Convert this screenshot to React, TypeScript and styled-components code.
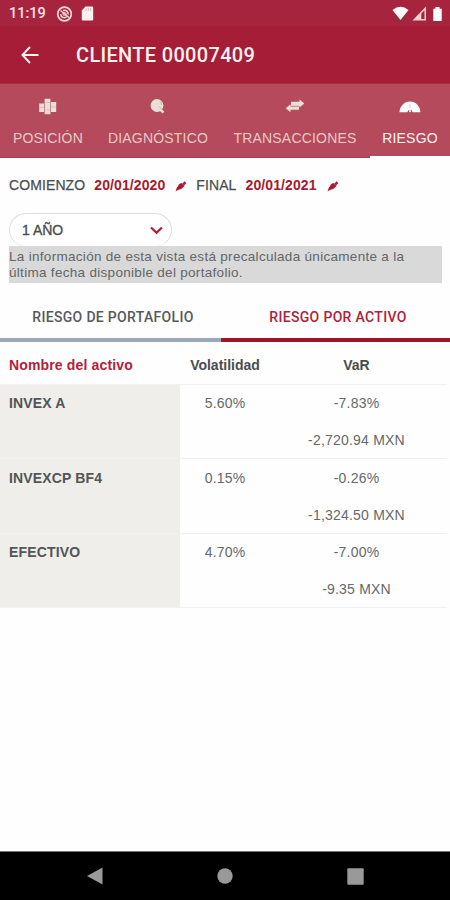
import React from 'react';
import styled, { createGlobalStyle } from 'styled-components';

const GlobalStyle = createGlobalStyle`
  * { box-sizing: border-box; }
  body { margin: 0; background: #fff; }
`;

const Screen = styled.div`
  width: 450px;
  height: 900px;
  display: flex;
  flex-direction: column;
  overflow: hidden;
  background: #fefefe;
  font: 14px/16px "Liberation Sans", Arial, sans-serif;
  color: #555759;
  white-space: nowrap;
`;

const StatusBar = styled.div`
  height: 26px;
  flex: none;
  display: flex;
  align-items: center;
  padding: 1px 5px 0 9px;
  background: #a6243e;
  color: #fbe9e6;
  font: 500 14.5px/20px Roboto, sans-serif;
`;

const Clock = styled.span`
  width: 47px;
`;

const StatusIcons = styled.div<{ $end?: boolean }>`
  display: flex;
  align-items: center;
  gap: ${(p) => (p.$end ? 3 : 8)}px;
  margin-left: ${(p) => (p.$end ? 'auto' : '0')};
`;

const AppBar = styled.header`
  height: 57px;
  flex: none;
  display: flex;
  align-items: center;
  padding-left: 20px;
  background: #a51d36;
  color: #fff1ee;
`;

const Title = styled.h1`
  margin: 1px 0 0 36px;
  font: 500 20px/24px Roboto, sans-serif;
  letter-spacing: 0.32px;
`;

const TabBar = styled.nav`
  height: 75px;
  flex: none;
  display: flex;
  background: #b54a5d;
  border-top: 1px solid #ac2f47;
`;

const Tab = styled.button<{ $width: number; $active?: boolean }>`
  width: ${(p) => p.$width}px;
  flex: none;
  display: flex;
  flex-direction: column;
  align-items: center;
  margin: 0;
  padding: 13px 0 0;
  border: 0;
  border-bottom: ${(p) => (p.$active ? '2px solid #fff' : '1px solid #ad3c50')};
  background: none;
  color: ${(p) => (p.$active ? '#fff3f0' : '#e9c9c6')};
  font: inherit;
  letter-spacing: 0.2px;
  svg { height: 20px; margin-bottom: 13px; color: ${(p) => (p.$active ? '#fff' : '#eadfd6')}; }
`;

const Content = styled.main`
  flex: 1;
  display: flex;
  flex-direction: column;
`;

const DateRow = styled.div`
  display: flex;
  align-items: center;
  height: 55px;
  padding: 0 0 1px 9px;
  svg { margin-top: 2px; }
`;

const DateLabel = styled.span`
  color: #4b4d50;
  letter-spacing: 0.1px;
  -webkit-text-stroke: 0.25px #4b4d50;
`;

const DateValue = styled.strong`
  margin: 0 10px 0 9px;
  color: #a8192f;
  letter-spacing: 0.1px;
`;

const DateField = styled.div`
  display: flex;
  align-items: center;
  margin-right: 9px;
`;

const Period = styled.button`
  width: 163px;
  height: 34px;
  margin: 0 0 0 9px;
  padding: 0 8px 0 12px;
  display: flex;
  align-items: center;
  justify-content: space-between;
  border: 1px solid #dedede;
  border-bottom-color: #f0f0f0;
  border-radius: 17px;
  background: #fff;
  color: #4b4d50;
  font: inherit;
  -webkit-text-stroke: 0.35px #4b4d50;
`;

const Notice = styled.p`
  width: 433px;
  height: 37px;
  margin: -1px 0 0 9px;
  padding-top: 3px;
  background: #d9d9d9;
  color: #646668;
  font-size: 13.5px;
  letter-spacing: 0.3px;
`;

const Segments = styled.div`
  display: flex;
  height: 59px;
`;

const Segment = styled.button<{ $active?: boolean }>`
  width: ${(p) => (p.$active ? 229 : 221)}px;
  margin: 0;
  padding: 12px 0 0 5px;
  border: 0;
  border-bottom: 4px solid ${(p) => (p.$active ? '#a3142c' : '#9ba8b8')};
  background: none;
  color: ${(p) => (p.$active ? '#b0213a' : '#56595c')};
  font: 500 14px/18px Roboto, sans-serif;
  letter-spacing: 0.32px;
`;

const Table = styled.div`
  display: flex;
  flex-direction: column;
`;

const Row = styled.div<{ $head?: boolean }>`
  display: grid;
  grid-template-columns: 180px 90px 173px;
  width: 447px;
  height: ${(p) => (p.$head ? 42.5 : 74.6)}px;
  border-bottom: 1px solid #f1f1f1;
`;

const NameCell = styled.div<{ $head?: boolean }>`
  padding: ${(p) => (p.$head ? 15 : 10.5)}px 0 0 9px;
  background: ${(p) => (p.$head ? 'transparent' : '#efeeea')};
  color: ${(p) => (p.$head ? '#b2213b' : '#535557')};
  font-weight: bold;
  letter-spacing: 0.15px;
`;

const Cell = styled.div<{ $head?: boolean }>`
  display: flex;
  flex-direction: column;
  gap: 21px;
  align-items: center;
  padding-top: ${(p) => (p.$head ? 15 : 10.5)}px;
  color: ${(p) => (p.$head ? '#4b4d50' : '#666869')};
  font-weight: ${(p) => (p.$head ? 'bold' : 'normal')};
  letter-spacing: ${(p) => (p.$head ? 0 : 0.2)}px;
`;

const SystemNav = styled.footer`
  height: 49px;
  flex: none;
  display: grid;
  grid-template-columns: repeat(3, 130px);
  justify-content: center;
  align-items: center;
  justify-items: center;
  border-top: 1px solid #777;
  background: #000;
`;

const Pencil = () => (
  <svg width="12" height="12" viewBox="0 0 12 12" fill="#ae1932">
    <path d="M.5 11.2 2 7.2 3.2 6l.6-1.7L6.5 3l1.3.6L9.4 1.2l2 2-2.2 2 .2 1L6.2 9l-2 .6Z" />
    <path d="m7.2 3.6 2 2" stroke="#d77d8b" strokeWidth=".6" />
  </svg>
);

const tabs = [
  {
    label: 'POSICIÓN', width: 96, icon: (
      <svg width="20" height="20" viewBox="0 0 20 20" fill="currentColor">
        <path d="M1.2 6.5H6V15H1.2ZM6.6 1.8h5.8v15.4H6.6ZM13 5h5.2v10H13Z" />
        <path d="M1 10.5h5M13 10h5M6.6 5.5h5.8M6.6 13h5.8" stroke="#d5a8a8" strokeWidth=".6" />
      </svg>
    ),
  },
  {
    label: 'DIAGNÓSTICO', width: 124, icon: (
      <svg width="20" height="20" viewBox="0 0 20 20" fill="currentColor">
        <circle cx="9" cy="8.5" r="6.4" />
        <path d="m11.5 11.8 4 3.8" stroke="currentColor" strokeWidth="2.6" />
        <path d="m11 9.5 3 3M12.8 4.5l.7 3.5" stroke="#cf9c9e" strokeWidth=".8" fill="none" />
      </svg>
    ),
  },
  {
    label: 'TRANSACCIONES', width: 150, icon: (
      <svg width="20" height="20" viewBox="0 0 20 20" fill="currentColor">
        <path d="M6 4.8h8.5V2.6l4.8 4-4.8 3.8V9H6ZM14 12.8H5.5v2.5L.7 11.2l4.8-4v2.2H14Z" />
        <path d="M6 9.2h8" stroke="#c98d90" strokeWidth=".6" />
      </svg>
    ),
  },
  {
    label: 'RIESGO', width: 80, active: true, icon: (
      <svg width="22" height="20" viewBox="0 0 22 20" fill="currentColor">
        <path d="M.5 15.2a10.5 10.7 0 0 1 21 0h-8a2.5 2.5 0 0 0-5 0Z" />
        <circle cx="11" cy="14.2" r="1.1" />
        <path d="M11 7v4M4.5 10l.8.8M17.5 10l-.8.8" stroke="#dba5ad" strokeWidth=".7" />
      </svg>
    ),
  },
];

const assets = [
  { name: 'INVEX A', volatility: '5.60%', pct: '-7.83%', amount: '-2,720.94 MXN' },
  { name: 'INVEXCP BF4', volatility: '0.15%', pct: '-0.26%', amount: '-1,324.50 MXN' },
  { name: 'EFECTIVO', volatility: '4.70%', pct: '-7.00%', amount: '-9.35 MXN' },
];

export default function App() {
  return (
    <Screen>
      <GlobalStyle />
      <StatusBar>
        <Clock>11:19</Clock>
        <StatusIcons>
          <svg width="17" height="16" viewBox="0 0 17 16" fill="none" stroke="#f6dcd9">
            <circle cx="8.5" cy="8" r="6.8" strokeWidth="1.7" />
            <path d="m4.5 4.5 8.5 7M4.7 8c0 3.5 4 4.5 6 2.8M7 4.5c3-1 5.5 1.5 5 4" strokeWidth="1.5" />
            <circle cx="8.5" cy="8" r="1.6" strokeWidth="1" />
          </svg>
          <svg width="13" height="15" viewBox="0 0 13 15" fill="#fff1ee">
            <path d="M4.5.5H11q1.2 0 1.2 1.2v11.6q0 1.2-1.2 1.2H2q-1.2 0-1.2-1.2V4.5Z" />
            <path d="M5 2v3M7.3 2v3M9.6 2v3" stroke="#dba5aa" strokeWidth=".8" />
          </svg>
        </StatusIcons>
        <StatusIcons $end>
          <svg width="17" height="15" viewBox="0 0 17 15" fill="#fff">
            <path d="M.5 4q8-6.5 16 0L8.5 14Z" />
          </svg>
          <svg width="15" height="15" viewBox="0 0 15 15" fill="#f5d5d4">
            <path fillRule="evenodd" d="M14 .5v14H.5ZM12.5 4.2v8.8H9.3V7.5Z" />
          </svg>
          <svg width="15" height="16" viewBox="0 0 15 16" fill="#fff">
            <path d="M5.5 1h4v1.7h2.2V15H3.3V2.7h2.2Z" />
          </svg>
        </StatusIcons>
      </StatusBar>
      <AppBar>
        <svg width="20" height="18" viewBox="0 0 20 18" fill="none" stroke="currentColor" strokeWidth="2">
          <path d="M18.5 9H3M10 1 2.5 9l7.5 8" />
        </svg>
        <Title>CLIENTE 00007409</Title>
      </AppBar>
      <TabBar>
        {tabs.map((t) => (
          <Tab key={t.label} $width={t.width} $active={t.active}>
            {t.icon}
            {t.label}
          </Tab>
        ))}
      </TabBar>
      <Content>
        <DateRow>
          <DateField><DateLabel>COMIENZO</DateLabel><DateValue>20/01/2020</DateValue><Pencil /></DateField>
          <DateField><DateLabel>FINAL</DateLabel><DateValue>20/01/2021</DateValue><Pencil /></DateField>
        </DateRow>
        <Period>
          1 AÑO
          <svg width="13" height="9" viewBox="0 0 13 9" fill="none" stroke="#b01c35" strokeWidth="2.2">
            <path d="m1 1.5 5.5 5.3L12 1.5" />
          </svg>
        </Period>
        <Notice>
          La información de esta vista está precalculada únicamente a la<br />
          última fecha disponible del portafolio.
        </Notice>
        <Segments>
          <Segment>RIESGO DE PORTAFOLIO</Segment>
          <Segment $active>RIESGO POR ACTIVO</Segment>
        </Segments>
        <Table>
          <Row $head>
            <NameCell $head>Nombre del activo</NameCell>
            <Cell $head>Volatilidad</Cell>
            <Cell $head>VaR</Cell>
          </Row>
          {assets.map((a) => (
            <Row key={a.name}>
              <NameCell>{a.name}</NameCell>
              <Cell>{a.volatility}</Cell>
              <Cell><span>{a.pct}</span><span>{a.amount}</span></Cell>
            </Row>
          ))}
        </Table>
      </Content>
      <SystemNav>
        <svg width="18" height="18" viewBox="0 0 18 18" fill="#999"><path d="M16.5.5v17L1 9Z" /></svg>
        <svg width="16" height="16" viewBox="0 0 16 16" fill="#999"><circle cx="8" cy="8" r="7.7" /></svg>
        <svg width="17" height="17" viewBox="0 0 17 17" fill="#999"><rect x=".3" y=".3" width="16.4" height="16.4" rx="1" /></svg>
      </SystemNav>
    </Screen>
  );
}
